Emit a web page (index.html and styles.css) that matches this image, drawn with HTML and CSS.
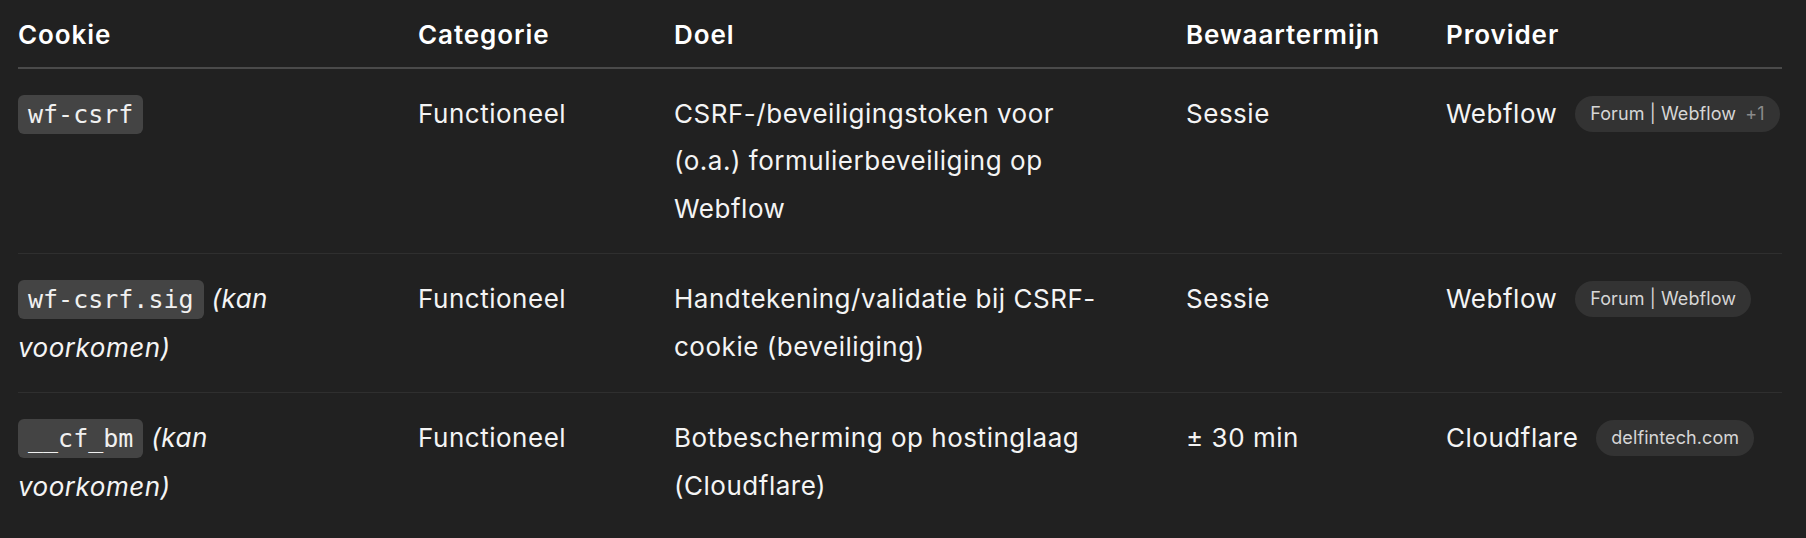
FILE: index.html
```html
<!DOCTYPE html>
<html lang="nl">
<head>
<meta charset="utf-8">
<title>Cookies</title>
<link rel="stylesheet" href="styles.css">
</head>
<body>
<table class="cookies">
  <colgroup>
    <col class="c-cookie">
    <col class="c-cat">
    <col class="c-doel">
    <col class="c-term">
    <col class="c-prov">
  </colgroup>
  <thead>
    <tr>
      <th>Cookie</th>
      <th>Categorie</th>
      <th>Doel</th>
      <th>Bewaartermijn</th>
      <th>Provider</th>
    </tr>
  </thead>
  <tbody>
    <tr>
      <td class="td-cookie"><code class="chip">wf-csrf</code></td>
      <td>Functioneel</td>
      <td class="td-doel">CSRF-/beveiligingstoken voor (o.a.) formulierbeveiliging op Webflow</td>
      <td>Sessie</td>
      <td class="td-prov">Webflow <span class="pill">Forum | Webflow <span class="more">+1</span></span></td>
    </tr>
    <tr>
      <td class="td-cookie"><code class="chip">wf-csrf.sig</code> <em>(kan voorkomen)</em></td>
      <td>Functioneel</td>
      <td class="td-doel">Handtekening/validatie bij CSRF-cookie (beveiliging)</td>
      <td>Sessie</td>
      <td class="td-prov">Webflow <span class="pill">Forum | Webflow</span></td>
    </tr>
    <tr>
      <td class="td-cookie"><code class="chip">__cf_bm</code> <em>(kan voorkomen)</em></td>
      <td>Functioneel</td>
      <td class="td-doel">Botbescherming op hostinglaag (Cloudflare)</td>
      <td>± 30 min</td>
      <td class="td-prov">Cloudflare <span class="pill">delfintech.com</span></td>
    </tr>
  </tbody>
</table>
</body>
</html>
```
FILE: styles.css
```css
html, body {
  margin: 0;
  padding: 0;
  background: #212121;
}
body {
  color: #f4f4f4;
  font-family: Inter, "Noto Sans", sans-serif;
  font-size: 26px;
  line-height: 47.5px;
  letter-spacing: 0.02em;
}
.cookies {
  margin-left: 18px;
  width: 1764px;
  table-layout: fixed;
  border-collapse: collapse;
}
.c-cookie { width: 400px; }
.c-cat { width: 256px; }
.c-doel { width: 512px; }
.c-term { width: 260px; }
.c-prov { width: 336px; }

.cookies th {
  text-align: left;
  font-weight: 600;
  color: #ffffff;
  letter-spacing: 0.035em;
  padding: 11px 24px 8px 0;
  border-bottom: 2px solid #4a4a4a;
}
.cookies td {
  vertical-align: top;
  padding: 21px 24px 21px 0;
  border-bottom: 1px solid #2f2f2f;
}
.cookies tbody tr:last-child td {
  border-bottom: none;
}
.cookies .td-cookie { padding-right: 70px; }
.cookies .td-doel { padding-right: 86px; }
.cookies .td-prov { padding-right: 0; white-space: nowrap; }

.chip {
  font-family: "DejaVu Sans Mono", "Liberation Mono", monospace;
  font-size: 25px;
  letter-spacing: 0;
  background: #444444;
  color: #f0f0f0;
  padding: 5px 10px;
  border-radius: 6px;
}
em {
  font-style: italic;
}
.pill {
  display: inline-block;
  vertical-align: 3px;
  margin-left: 10px;
  height: 36px;
  line-height: 36px;
  padding: 0 15px;
  border-radius: 18px;
  background: #333333;
  color: #d6d6d6;
  font-size: 18px;
  letter-spacing: 0.005em;
}
.more {
  color: #8a8a8a;
  margin-left: 4px;
}
```
